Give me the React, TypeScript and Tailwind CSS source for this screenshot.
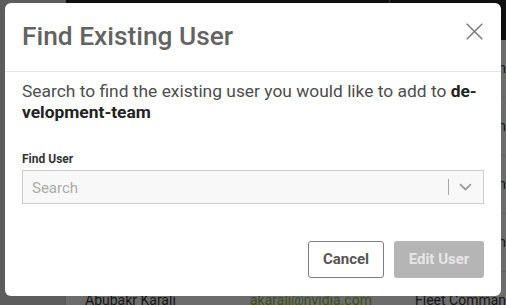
type Member = {
  name: string;
  email: string;
  role: string;
};

// only the last row sits below the modal; the rest peek out on the right edge
const members: Member[] = [
  { name: "", email: "", role: "Fleet Command" },
  { name: "", email: "", role: "Fleet Command" },
  { name: "", email: "", role: "Fleet Command" },
  { name: "", email: "", role: "Fleet Command" },
  { name: "Abubakr Karali", email: "akarali@nvidia.com", role: "Fleet Command" },
];

function BackgroundPage() {
  return (
    <div className="flex h-full">
      <aside className="h-full w-[66px] border-r border-[#555] bg-[#5d5d5d]" />
      <div className="flex flex-1 flex-col">
        <header className="flex h-[40px] shrink-0 bg-[#0f0f0f]">
          <div className="w-[324px] border-r border-[#3c3c3c]" />
        </header>
        {members.map((m, i) => (
          <div
            key={i}
            className="flex h-[58px] shrink-0 items-center whitespace-nowrap border-b border-[#5e5e5e] pl-[19px] text-[14px] text-[#151515]"
          >
            <div className="w-[165px]">{m.name}</div>
            <div className="w-[165px] text-[#3d4f12]">{m.email}</div>
            <div className="w-[87px]">{m.role}</div>
          </div>
        ))}
      </div>
    </div>
  );
}

function FindUserModal() {
  return (
    <div
      role="dialog"
      aria-label="Find Existing User"
      className="absolute left-[5px] top-[3px] flex w-[496px] flex-col rounded-[6px] bg-white"
    >
      <div className="flex items-start justify-between border-b border-[#e6e6e6] px-[17px] pb-[20px] pt-[18px]">
        <h2 className="text-[26.3px] font-medium leading-[30px] text-[#636363]">
          Find Existing User
        </h2>
        <button type="button" aria-label="Close" className="mr-[1px] mt-[2px]">
          <svg width="17" height="17" viewBox="0 0 17 17">
            <path d="M0.7 0.7l15.6 15.6M16.3 0.7L0.7 16.3" stroke="#7a7a7a" strokeWidth="1.5" />
          </svg>
        </button>
      </div>
      <div className="px-[17px] pt-[9px]">
        <p className="text-[17.4px] leading-[21px] text-[#4d4d4d]">
          Search to find the existing user you would like to add to{" "}
          <span className="font-bold text-[#222]">de{"\u00AD"}velopment-team</span>
        </p>
        <label className="mt-[28px] block text-[12px] font-bold leading-[16px] text-[#333]">
          Find User
        </label>
        <div className="mt-[3px] flex h-[34px] items-center border border-[#cccccc] bg-[#f8f8f8]">
          <input
            placeholder="Search"
            className="h-full flex-1 bg-transparent pl-[9px] pt-[2px] text-[15px] text-[#333] outline-none placeholder:text-[#ababab]"
          />
          <span className="h-[16px] w-px bg-[#a8a8a8]" />
          <svg
            width="13"
            height="8"
            viewBox="0 0 13 8"
            className="ml-[10px] mr-[11px]"
          >
            <path d="M1 1.2l5.5 5.3L12 1.2" fill="none" stroke="#9a9a9a" strokeWidth="1.8" />
          </svg>
        </div>
      </div>
      <div className="flex justify-end gap-[10px] px-[17px] pb-[18px] pt-[37px]">
        <button
          type="button"
          className="h-[37px] w-[76px] rounded-[3px] border border-[#7d7d7d] text-[15px] font-bold text-[#555]"
        >
          Cancel
        </button>
        <button
          type="button"
          disabled
          className="h-[37px] w-[90px] rounded-[3px] bg-[#b5b5b5] text-[15px] font-bold text-[#e6e6e6]"
        >
          Edit User
        </button>
      </div>
    </div>
  );
}

export default function App() {
  return (
    <div className="relative h-[305px] w-[506px] overflow-hidden bg-[#6c6c6c] font-['Roboto',sans-serif]">
      <BackgroundPage />
      <FindUserModal />
    </div>
  );
}
